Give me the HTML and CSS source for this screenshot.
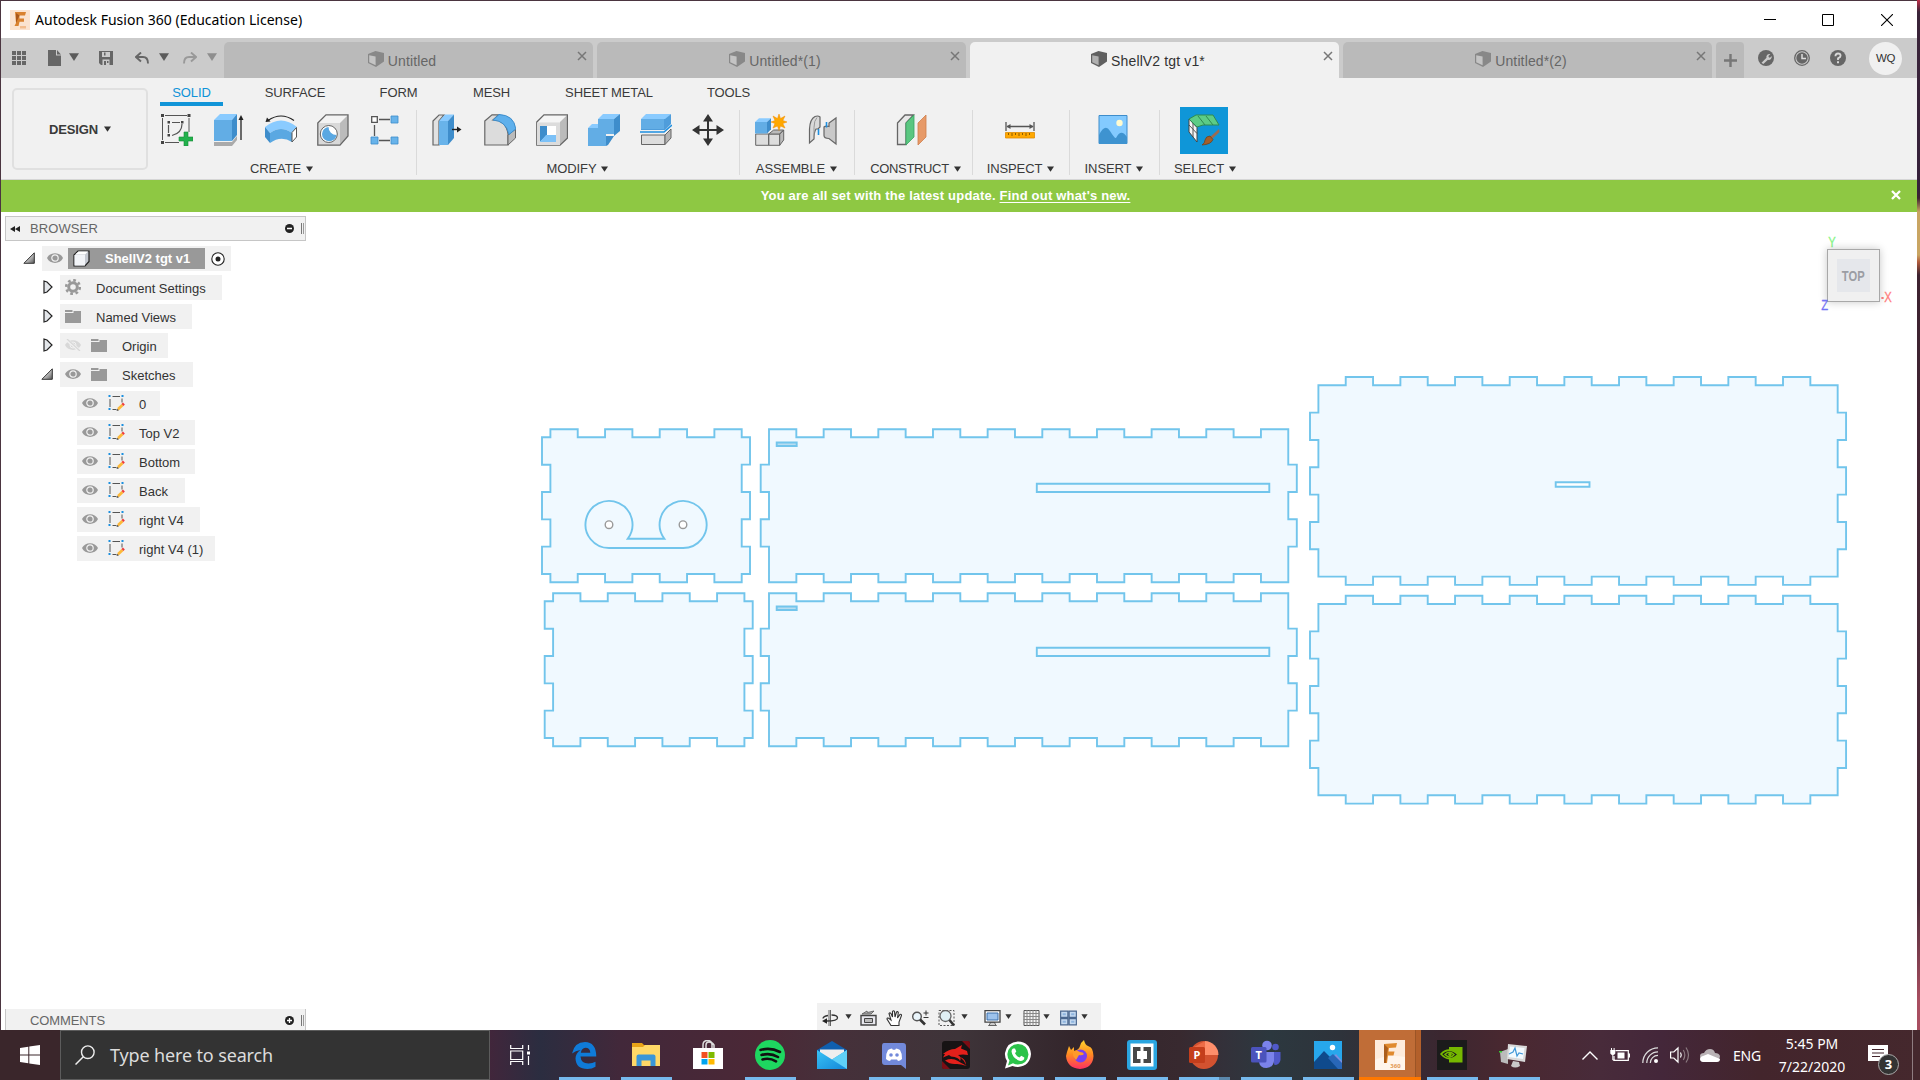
FILE: index.html
```
<!DOCTYPE html>
<html lang="en">
<head>
<meta charset="utf-8">
<title>Autodesk Fusion 360 (Education License)</title>
<link rel="stylesheet" href="styles.css">
</head>
<body>
<svg class="defs" width="0" height="0">
  <defs>
    <linearGradient id="triGrad" x1="0" y1="0" x2="1" y2="1"><stop offset=".3" stop-color="#eee"/><stop offset="1" stop-color="#555"/></linearGradient>
    <linearGradient id="flame" x1="0" y1="0" x2="0" y2="1"><stop offset="0" stop-color="#ffd52e"/><stop offset=".5" stop-color="#ff8a22"/><stop offset="1" stop-color="#ff2f63"/></linearGradient>
    <linearGradient id="mailG" x1="0" y1="0" x2="1" y2="1"><stop offset="0" stop-color="#39c3f5"/><stop offset="1" stop-color="#1487d8"/></linearGradient>
    <symbol id="eye" viewBox="0 0 16 12"><path d="M0 6C3 -.5 13 -.5 16 6 13 12.500 3 12.500 0 6Z" fill="#999"/><circle cx="8" cy="6" r="3.200" fill="none" stroke="#f1f1f1" stroke-width="1.200"/></symbol>
    <symbol id="eyeOff" viewBox="0 0 16 12"><path d="M0 6C3 -.5 13 -.5 16 6 13 12.500 3 12.500 0 6Z" fill="#d8d8d8"/><circle cx="8" cy="6" r="3" fill="none" stroke="#f1f1f1"/><path d="M1 0l14 12" stroke="#f1f1f1" stroke-width="3"/><path d="M2 0l13 12" stroke="#d8d8d8" stroke-width="1.300"/></symbol>
    <symbol id="folder" viewBox="0 0 16 14"><path d="M0 1h7.500v2H0zM0 4h8.500V2H16v12H0z" fill="#999"/></symbol>
    <symbol id="sketch" viewBox="0 0 16 16"><path d="M1.500 4v8M13.500 3.500v4M4 1.500h7.500M4 14.500h4" stroke="#555" fill="none"/><path d="M0 0h2v2H0zM13 0h2v2h-2zM0 13h2v2H0z" fill="#1a8fe0"/><path d="M9 15.500l0-2.800 4-3.700 2 2-4 3.800z" fill="#fdb93a"/><path d="M13 9l1.500-1.500 1.800 2L15 11z" fill="#ee3a3a"/><path d="M8 16l.8-2.200 1.600 1.600z" fill="#555"/></symbol>
    <symbol id="open" viewBox="0 0 12 12"><path d="M11.300 .8v10.500H.9z" fill="url(#triGrad)" stroke="#333" stroke-width="1"/></symbol>
    <symbol id="shut" viewBox="0 0 10 14"><path d="M1 1v12l3-1 5-5-5-5z" fill="#e3e6ea" stroke="#222" stroke-width="1.200"/></symbol>
    <symbol id="part" viewBox="0 0 16 16"><path d="M0 3L7.500 0 16 2v8.500L8 16 0 12z" fill="currentColor"/><path d="M1.200 4.300L7.600 5.500v8.700L1.200 11.300z" fill="#fff" fill-opacity=".5"/></symbol>
    <symbol id="x" viewBox="0 0 10 10"><path d="M1 1l8 8M9 1l-8 8" stroke="currentColor" stroke-width="1.500"/></symbol>
    <symbol id="dn" viewBox="0 0 10 8"><path d="M0 .3h10L5 8z" fill="currentColor"/></symbol>
    <path id="longSide" d="M769 429.300h27.330v8h27.330v-8h27.330v8h27.330v-8h27.330v8h27.330v-8h27.330v8h27.330v-8h27.330v8h27.330v-8h27.330v8h27.330v-8h27.330v8h27.330v-8h27.330v8h27.330v-8h27.330v8h27.330v-8h27.330V464.600H1296.800v27.330h-8.500v27.330h8.500v27.330h-8.500V582.300h-27.330v-8.300h-27.330v8.300h-27.330v-8.300h-27.330v8.300h-27.330v-8.300h-27.330v8.300h-27.330v-8.300h-27.330v8.300h-27.330v-8.300h-27.330v8.300h-27.330v-8.300h-27.330v8.300h-27.330v-8.300h-27.330v8.300h-27.330v-8.300h-27.330v8.300h-27.330v-8.300h-27.330v8.300H769V546.600h-8.300v-27.330h8.300v-27.330h-8.300v-27.330h8.300z"/>
    <path id="broad" d="M1318.400 385.300h27.330v-8.300h27.330v8.300h27.330v-8.300h27.330v8.300h27.330v-8.300h27.330v8.300h27.330v-8.300h27.330v8.300h27.330v-8.300h27.330v8.300h27.330v-8.300h27.330v8.300h27.330v-8.300h27.330v8.300h27.330v-8.300h27.330v8.300h27.330v-8.300h27.330v8.300h27.330v27.330h8.400v27.330h-8.400v27.330h8.400v27.330h-8.400v27.330h8.400v27.330h-8.400v27.330h-27.330v8.300h-27.330v-8.300h-27.330v8.300h-27.330v-8.300h-27.330v8.300h-27.330v-8.300h-27.330v8.300h-27.330v-8.300h-27.330v8.300h-27.330v-8.300h-27.330v8.300h-27.330v-8.300h-27.330v8.300h-27.330v-8.300h-27.330v8.300h-27.330v-8.300h-27.330v8.300h-27.330v-8.300h-27.330v-27.330h-8.400v-27.330h8.400v-27.330h-8.400v-27.330h8.400v-27.330h-8.400v-27.330h8.400z"/>
    <path id="endSide" d="M550.400 429.300h27.330v8h27.330v-8h27.330v8h27.330v-8h27.330v8h27.330v-8h27.330v8h8.300v27.330h-8.300v27.330h8.300v27.330h-8.300v27.330h8.300V574h-8.300v8.300h-27.330v-8.300h-27.330v8.300h-27.330v-8.300h-27.330v8.300h-27.330v-8.300h-27.330v8.300H550.400v-8.300H542v-27.330h8.400v-27.330H542v-27.330h8.400v-27.330H542V437.300h8.400z"/>
  </defs>
</svg>

<div class="window">
  <header class="titlebar">
    <svg class="app-logo" viewBox="0 0 20 20"><path d="M0 0h20v20H0z" fill="#fbe3cf"/><path d="M5 2h11l-1 3.500H9.500v3H14v3.300H9.500L8.500 16H4.500L6 13z" fill="#d9822f"/><path d="M9.500 5.500L6 13V3z" fill="#a9571a"/><path d="M10 16h6v2.500h-6z" fill="#f3bd8e"/></svg>
    <span>Autodesk Fusion 360 (Education License)</span>
    <div class="winbtns">
      <svg viewBox="0 0 12 12"><path d="M0 5.500h12" stroke="#000"/></svg>
      <svg viewBox="0 0 12 12"><path d="M.5 .5h11v11H.5z" fill="none" stroke="#000"/></svg>
      <svg viewBox="0 0 12 12"><path d="M0 0l12 12M12 0L0 12" stroke="#000" stroke-width="1.100"/></svg>
    </div>
  </header>

  <nav class="tabbar">
    <div class="quick">
      <svg class="q-grid" viewBox="0 0 14 14"><path d="M0 0h4v4H0zM5 0h4v4H5zM10 0h4v4h-4zM0 5h4v4H0zM5 5h4v4H5zM10 5h4v4h-4zM0 10h4v4H0zM5 10h4v4H5zM10 10h4v4h-4z" fill="#666"/></svg>
      <svg class="q-doc" viewBox="0 0 13 16"><path d="M0 0h8v5.500h5V16H0zM9 0l4 4.500H9z" fill="#666"/></svg>
      <svg class="q-arr" viewBox="0 0 10 8"><use href="#dn"/></svg>
      <svg class="q-save" viewBox="0 0 14 14"><path d="M0 0h14v14H2l-2-2z" fill="#666"/><path d="M3 1h8v5H3zM3.500 8.500h7V14h-7z" fill="#cbcbcb"/><path d="M5 1.500h1.500v3H5zM5 10h2v4H5zM8 10h1.500v2H8z" fill="#666"/></svg>
      <svg class="q-undo" viewBox="0 0 14 12"><path d="M6 .5L1 5l5 4.500M1.500 5H8q5 0 5 6.500" fill="none" stroke="#666" stroke-width="1.900"/></svg>
      <svg class="q-arr q-arr2" viewBox="0 0 10 8"><use href="#dn"/></svg>
      <svg class="q-redo" viewBox="0 0 14 12"><path d="M8 .5L13 5 8 9.500M12.500 5H6Q1 5 1 11.500" fill="none" stroke="#999" stroke-width="1.900"/></svg>
      <svg class="q-arr q-arr3" viewBox="0 0 10 8"><use href="#dn"/></svg>
    </div>
    <div class="tab"><svg class="part"><use href="#part"/></svg><span>Untitled</span><svg class="tx"><use href="#x"/></svg></div>
    <div class="tab"><svg class="part"><use href="#part"/></svg><span>Untitled*(1)</span><svg class="tx"><use href="#x"/></svg></div>
    <div class="tab active"><svg class="part"><use href="#part"/></svg><span>ShellV2 tgt v1*</span><svg class="tx"><use href="#x"/></svg></div>
    <div class="tab"><svg class="part"><use href="#part"/></svg><span>Untitled*(2)</span><svg class="tx"><use href="#x"/></svg></div>
    <div class="newtab"><svg viewBox="0 0 14 14"><path d="M7 0v14M0 7h14" stroke="#777" stroke-width="2.600"/></svg></div>
    <div class="status">
      <svg viewBox="0 0 16 16"><circle cx="8" cy="8" r="8" fill="#666"/><path d="M3.500 12.800l5-5a3 3 0 0 1 3.900-3.700l-2 2 .4 1.200 1.200.4 1.600-1.700a3 3 0 0 1-3.700 3.800l-4.600 4.300z" fill="#cbcbcb"/></svg>
      <svg viewBox="0 0 16 16"><circle cx="8" cy="8" r="7.300" fill="none" stroke="#666" stroke-width="1.300"/><circle cx="8" cy="8" r="5.700" fill="#666"/><path d="M8 4v4.500h4" fill="none" stroke="#ddd" stroke-width="1.500"/></svg>
      <svg viewBox="0 0 16 16"><circle cx="8" cy="8" r="8" fill="#666"/><path d="M5.400 6.200Q5.500 3.500 8 3.500t2.600 2.300Q10.600 7.300 8 8.300V10" fill="none" stroke="#d8d8d8" stroke-width="1.800"/><path d="M7 11.300h2v2H7z" fill="#d8d8d8"/></svg>
      <span class="avatar">WQ</span>
    </div>
  </nav>

  <section class="ribbon">
    <div class="workspace">DESIGN<svg class="ga"><use href="#dn"/></svg></div>
    <div class="ribbon-main">
      <div class="rtabs"><span class="on">SOLID</span><span class="w84">SURFACE</span><span>FORM</span><span>MESH</span><span class="w112">SHEET METAL</span><span class="w67">TOOLS</span></div>
      <div class="groups">
        <div class="group g1"><div class="icons">
          <svg viewBox="0 0 32 32"><path d="M4 1.500h22M1.500 4v22M4 28.500h14M28 4v14" stroke="#555" fill="none"/><path d="M7.500 11v8M11 8.500h8M21 10q0 9-10 11.500" stroke="#555" fill="none" stroke-width="1.200"/><path d="M0 0h3v3H0zM26.500 0h3v3h-3zM0 27h3v3H0zM6.500 7H9v2.500H6.500zM20 7h2.500v2.500H20zM6.500 20H9v2.500H6.500z" fill="#444"/><path d="M23 18h4v5h5v4h-5v5h-4v-5h-5v-4h5z" fill="#22b14c" stroke="#178a38" stroke-width=".6"/></svg>
          <svg viewBox="0 0 32 32"><path d="M1 28h18l5-6v4l-5 6H1z" fill="#aaa"/><path d="M1 6h18v21H1z" fill="#62ade5"/><path d="M1 6l6-6h17l-5 6z" fill="#8acbff"/><path d="M19 6l5-6v21l-5 6z" fill="#3e8dcb"/><path d="M28 26V4" stroke="#222" stroke-width="1.300"/><path d="M25.500 6L28 1l2.500 5z" fill="#222"/></svg>
          <svg viewBox="0 0 32 32"><path d="M0 13Q16 0 32 13l-5 6Q16 11 5 19z" fill="#8acbff"/><path d="M0 13l5 6v10l-5-6z" fill="#3e8dcb"/><path d="M5 19Q16 11 27 19v9q-11-7-22 1z" fill="#5aa8e2"/><path d="M27 18.500l4.500-5V23L27 28z" fill="#fff" stroke="#555"/><path d="M3 6.500Q16-2.500 29 6.500" fill="none" stroke="#222" stroke-width="1.200"/><path d="M.5 8l1.500-4.500 3.500 4z" fill="#222"/></svg>
          <svg viewBox="0 0 32 32"><path d="M.8 9L9 .8h22L23 9z" fill="#f3f3f3"/><path d="M23 9l8-8v21l-8 9z" fill="#bbb"/><path d="M.8 9H23v22H.8z" fill="#d9d9d9"/><path d="M.8 9L9 .8h22V22l-8 9.200H.8z" fill="none" stroke="#666" stroke-width="1.300"/><circle cx="11.800" cy="20" r="8.500" fill="#fff" stroke="#666"/><path d="M11.500 13a8 8 0 0 0 8 8q-1 6-7.700 6.200A7.200 7.200 0 0 1 5 20q.5-6 6.500-7z" fill="#5aa8e2"/></svg>
          <svg viewBox="0 0 32 32"><path d="M10 5.500h11M5.500 11v11M10 26.500h11" stroke="#555" stroke-width="1.300"/><path d="M2.700 2.700h5.600v5.600H2.700z" fill="#fff" stroke="#555" stroke-width="1.300"/><path d="M22 2h7v7h-7zM2 23h7v7H2zM22 23h7v7h-7z" fill="#68b3ea" stroke="#3e8dcb" stroke-width=".8"/></svg>
        </div><div class="gl">CREATE<svg class="ga"><use href="#dn"/></svg></div></div>
        <div class="group g2"><div class="icons">
          <svg viewBox="0 0 32 32"><path d="M1 7l6-6h5L7 7v24H1z" fill="#e2e2e2" stroke="#666" stroke-width="1.200"/><path d="M7 7h9v24H7z" fill="#68b3ea"/><path d="M7 7l6-6.500h9L16 7z" fill="#8acbff"/><path d="M16 7l6-6.500V24l-6 7z" fill="#3e8dcb"/><path d="M20 15.500h7" stroke="#222" stroke-width="1.400"/><path d="M25 12.500l4.500 3-4.500 3z" fill="#222"/></svg>
          <svg viewBox="0 0 32 32"><path d="M.8 7L8 .8h7L9 6q13 0 15 14v11H.8z" fill="#dcdcdc" stroke="#666" stroke-width="1.200"/><path d="M24 21l7.500-6v9L24 31z" fill="#bbb" stroke="#666"/><path d="M9 6l6-5.500Q30 1 31.800 15L25 20.500Q22 7 9 6z" fill="#5fb0ec" stroke="#3e8dcb"/></svg>
          <svg viewBox="0 0 32 32"><path d="M.8 8L8 .8h23.500L24 8z" fill="#f5f5f5"/><path d="M24 8l7.500-7.200V24L24 31z" fill="#bbb"/><path d="M.8 8L8 .8h23.500V24L24 31.200H.8z" fill="none" stroke="#666" stroke-width="1.300"/><path d="M1 8.500h23V31H1z" fill="#dcdcdc"/><path d="M4 12h16v16H4z" fill="#fff"/><path d="M4 12h7v9l-7 7z" fill="#3e8dcb"/><path d="M4 28l6-7h10v7z" fill="#7cc1f7"/></svg>
          <svg viewBox="0 0 32 32"><path d="M10 5h16v15h-8v12H0V14h10z" fill="#62ade5"/><path d="M10 5l5-5h17l-6 5zM0 14l4-4h6v4z" fill="#8acbff"/><path d="M26 5l6-5v17l-6 5zM18 22h8l-6 9-2 1z" fill="#3e8dcb"/></svg>
          <svg viewBox="0 0 32 32"><path d="M1 5l5-5h25l-5 5z" fill="#8acbff"/><path d="M25 5l6-5v10l-6 6H1V5z" fill="#4f9ddb"/><path d="M1 5h23v10H1z" fill="#62ade5"/><path d="M0 18h24l8-7" stroke="#1e8fe0" stroke-width="1.500" fill="none"/><path d="M1.500 21H25v9.500H1.500z" fill="#ddd" stroke="#666"/><path d="M25 21l6-6v9l-6 6.500z" fill="#b5b5b5" stroke="#666"/></svg>
          <svg viewBox="0 0 32 32"><path d="M16 5v22M5 16h22" stroke="#333" stroke-width="2"/><path d="M16 0l5 7.500H11zM16 32l5-7.500H11zM0 16l7.500-5v10zM32 16l-7.500-5v10z" fill="#333"/></svg>
        </div><div class="gl">MODIFY<svg class="ga"><use href="#dn"/></svg></div></div>
        <div class="group g3"><div class="icons">
          <svg viewBox="0 0 32 32"><path d="M.7 20h13v11.300H.7zM13.700 20h11v11.300h-11z" fill="#ddd" stroke="#666"/><path d="M13.700 20l5-4h10l-4 4zM24.700 20l4-4v10l-4 5.300z" fill="#bbb" stroke="#666"/><path d="M0 8h12v11.500H0z" fill="#62ade5"/><path d="M0 8l4-3.700h12L12 8z" fill="#8acbff"/><path d="M12 8l4-3.700v11l-4 4.200z" fill="#3e8dcb"/><path d="M24 0l1.500 4.500L30 2l-2.200 4.500 4.200 1.500-4.200 1.500L30 14l-4.500-2L24 16.500 22.500 12 18 14l2-4.500L16 8l4-1.500L18 2l4.500 2.500z" fill="#ffa800" stroke="#f08a00" stroke-width=".5"/></svg>
          <svg viewBox="0 0 32 32"><path d="M2.500 15Q3 5 8 2.500q3-1.200 5 .5v10l-2 2H9q-2 3-2 10l-4.500 4z" fill="#dadada" stroke="#666" stroke-width="1.200"/><path d="M10 3.500q-3 3-3 10v10" stroke="#999" fill="none"/><path d="M29 4v26l-7-5.500q-5 0-5-3V13q1.500-1.500 5-.5V9z" fill="#c9c9c9" stroke="#666" stroke-width="1.200"/><path d="M11.500 15v6M19.500 8v5.500" stroke="#1e8fe0" stroke-width="1.600"/></svg>
        </div><div class="gl">ASSEMBLE<svg class="ga"><use href="#dn"/></svg></div></div>
        <div class="group g4"><div class="icons">
          <svg viewBox="0 0 32 32"><path d="M1.500 9L9 1h8.500L10 9v21.500H1.500z" fill="#e8e8e8" stroke="#666" stroke-width="1.300"/><path d="M10 9l8-8v22l-8 8z" fill="#5ac680" stroke="#37a562" stroke-width=".8"/><path d="M22 9l8-8v22l-8 8z" fill="#e79a68" stroke="#cf7f4c" stroke-width=".8"/></svg>
        </div><div class="gl tight">CONSTRUCT<svg class="ga"><use href="#dn"/></svg></div></div>
        <div class="group g5"><div class="icons">
          <svg viewBox="0 0 32 32"><path d="M2 8v9M30 8v9M3 12.500h26" stroke="#555" stroke-width="1.300"/><path d="M2.500 12.500l4-2.500v5zM29.500 12.500l-4-2.500v5z" fill="#555"/><path d="M1.500 18.500h29v5.500h-29z" fill="#ffa800" stroke="#e08c00" stroke-width=".8"/><path d="M4.500 19v2M8 19v3M11.500 19v2M15 19v3M18.500 19v2M22 19v3M25.500 19v2" stroke="#8a5a00"/></svg>
        </div><div class="gl">INSPECT<svg class="ga"><use href="#dn"/></svg></div></div>
        <div class="group g6"><div class="icons">
          <svg viewBox="0 0 32 32"><path d="M2 1.500h28v28H2z" fill="#83caff" stroke="#3e8dcb"/><path d="M2 21Q8 9 13 17t6 7q5-10 11-1v7H2z" fill="#3e93d0"/><circle cx="22.500" cy="9" r="3.200" fill="#fffbd0"/></svg>
        </div><div class="gl">INSERT<svg class="ga"><use href="#dn"/></svg></div></div>
        <div class="group g7"><div class="icons sel"><span class="selbox">
          <svg viewBox="0 0 32 32"><path d="M1 5l8 8.500V28l-8-10z" fill="#f5f5f5" stroke="#444"/><path d="M1 11l8 8.500M5 9v14" stroke="#444" stroke-width=".9"/><path d="M1 5l7-4h17l6 10H15L9 13z" fill="#5ccc86" stroke="#2f8a52"/><path d="M10 2l7 9M18 2l7 9" stroke="#2f8a52"/><path d="M31 15l-9 8 2 2 7.500-7z" fill="#9a6b52"/><path d="M22 22l3 3.500q-2 5-11 5.500 3-2 3-5 1-4 5-4z" fill="#a35f2a" stroke="#6b3d17" stroke-width=".7"/></svg></span>
        </div><div class="gl">SELECT<svg class="ga"><use href="#dn"/></svg></div></div>
      </div>
    </div>
  </section>

  <div class="notice"><p>You are all set with the latest update. <a>Find out what's new.</a></p><svg class="nx" viewBox="0 0 10 10"><path d="M1 1l8 8M9 1l-8 8" stroke="#fff" stroke-width="2.300"/></svg></div>

  <main class="canvas">
    <svg class="drawing" viewBox="1 212 1916 818">
      <g class="profile">
        <use href="#endSide"/><use href="#endSide" transform="translate(2.700 164)"/>
        <use href="#longSide"/><use href="#longSide" transform="translate(0 164)"/>
        <use href="#broad"/><use href="#broad" transform="translate(0 218.700)"/>
        <path d="M609 548A23.500 23.500 0 1 1 627.700 538.700H664.400A23.500 23.500 0 1 1 683 548Z"/>
        <path d="M1036.800 483.700h232.500v8.300h-232.500zM1036.800 647.700h232.500v8.300h-232.500z"/>
        <path class="thin" d="M776.700 442.500h20v3.500h-20zM776.700 606.500h20v3.500h-20z"/>
        <path class="slit" d="M1555.700 482.200h33.800v4.600h-33.800z"/>
      </g>
      <g fill="#fff" stroke="#999" stroke-width="1.400"><circle cx="609" cy="524.700" r="3.800"/><circle cx="683" cy="524.700" r="3.800"/></g>
    </svg>

    <aside class="browser">
      <div class="panel-head"><svg class="rew" viewBox="0 0 10 6"><path d="M5 0v6L0 3zM10 0v6L5 3z" fill="#222"/></svg><span>BROWSER</span><svg class="pm" viewBox="0 0 9 9"><circle cx="4.500" cy="4.500" r="4.500" fill="#222"/><path d="M2 4.500h5" stroke="#fff" stroke-width="1.500"/></svg><i class="grip"></i></div>
      <ul class="tree">
        <li class="r0"><svg class="tw"><use href="#open"/></svg><div class="node root"><svg class="eye"><use href="#eye"/></svg><b><svg class="cube" viewBox="0 0 17 17"><path d="M1 5l4-4h11v10.500L12 16H1z" fill="#c4c8d0" stroke="#222" stroke-width="1.200"/><path d="M1.500 5H12v10.500H1.500z" fill="#f2f4f8"/><path d="M2 4.500l3.500-3H15l-3 3z" fill="#fff"/></svg>ShellV2 tgt v1</b><svg class="radio" viewBox="0 0 14 14"><circle cx="7" cy="7" r="6.200" fill="#fff" stroke="#222" stroke-width="1.100"/><circle cx="7" cy="7" r="2.500" fill="#222"/></svg></div></li>
        <li class="r1"><svg class="tws"><use href="#shut"/></svg><div class="node n162"><svg class="gear" viewBox="0 0 16 16"><circle cx="8" cy="8" r="6.800" fill="none" stroke="#999" stroke-width="2.600" stroke-dasharray="2.700 2.640"/><circle cx="8" cy="8" r="4.300" fill="none" stroke="#999" stroke-width="3"/></svg><span>Document Settings</span></div></li>
        <li class="r1"><svg class="tws"><use href="#shut"/></svg><div class="node n132"><svg class="folder"><use href="#folder"/></svg><span>Named Views</span></div></li>
        <li class="r1"><svg class="tws"><use href="#shut"/></svg><div class="node n108"><svg class="eye"><use href="#eyeOff"/></svg><svg class="folder f2"><use href="#folder"/></svg><span>Origin</span></div></li>
        <li class="r1"><svg class="tw"><use href="#open"/></svg><div class="node n133"><svg class="eye"><use href="#eye"/></svg><svg class="folder f2"><use href="#folder"/></svg><span>Sketches</span></div></li>
        <li class="r2"><div class="node n83"><svg class="eye"><use href="#eye"/></svg><svg class="sk"><use href="#sketch"/></svg><span>0</span></div></li>
        <li class="r2"><div class="node n118"><svg class="eye"><use href="#eye"/></svg><svg class="sk"><use href="#sketch"/></svg><span>Top V2</span></div></li>
        <li class="r2"><div class="node n118"><svg class="eye"><use href="#eye"/></svg><svg class="sk"><use href="#sketch"/></svg><span>Bottom</span></div></li>
        <li class="r2"><div class="node n108"><svg class="eye"><use href="#eye"/></svg><svg class="sk"><use href="#sketch"/></svg><span>Back</span></div></li>
        <li class="r2"><div class="node n123"><svg class="eye"><use href="#eye"/></svg><svg class="sk"><use href="#sketch"/></svg><span>right V4</span></div></li>
        <li class="r2"><div class="node n138"><svg class="eye"><use href="#eye"/></svg><svg class="sk"><use href="#sketch"/></svg><span>right V4 (1)</span></div></li>
      </ul>
    </aside>

    <div class="comments panel-head"><span>COMMENTS</span><svg class="pm" viewBox="0 0 9 9"><circle cx="4.500" cy="4.500" r="4.500" fill="#222"/><path d="M2 4.500h5M4.500 2v5" stroke="#fff" stroke-width="1.300"/></svg><i class="grip"></i></div>

    <div class="viewcube">
      <span class="ax y">Y</span><span class="ax dash"></span><span class="ax xx">X</span><div class="face"><span><em>TOP</em></span></div><span class="ax z">Z</span>
    </div>

    <div class="navbar">
      <svg class="n1" viewBox="0 0 17 16"><path d="M8.500 0v16M7 0v16" stroke="#555" stroke-width=".9"/><path d="M6 5.500q-5 1-5 3M9.500 5q6 0 6 3t-11 3" fill="none" stroke="#333" stroke-width="1.300"/><path d="M0 11l5-2.800v5.600z" fill="#222"/></svg><svg class="na a1"><use href="#dn"/></svg>
      <svg class="n2" viewBox="0 0 17 16"><path d="M1 5.500h15V15H1z" fill="#e8e8ee" stroke="#444" stroke-width="1.400"/><path d="M4.500 8.500h8v4h-8z" fill="#bbb" stroke="#444"/><path d="M2 4l5-3 .5 1.500L14 1l-3 3z" fill="#aaa" stroke="#555" stroke-width=".8"/></svg>
      <svg class="n3" viewBox="0 0 17 16"><path d="M5 15.500L1 9q0-1.500 1.700-.8L5 10 3 3.500q.8-1.300 2 0L6.500 7 6.500 1.500q1-1.500 2 0L9 7l1.500-5q1.300-1 1.800.5L11.500 8 14 4.500q1.500-.7 1.500 1L13 12v3.500z" fill="#fff" stroke="#333" stroke-width="1.100"/></svg>
      <svg class="n4" viewBox="0 0 17 16"><circle cx="5" cy="6.500" r="4.300" fill="#eaf5fb" stroke="#555" stroke-width="1.400"/><path d="M8 9.500l5 5" stroke="#333" stroke-width="2.600"/><path d="M11.500 3h5M14 .5v5M11.500 7.500h5" stroke="#333"/></svg>
      <svg class="n5" viewBox="0 0 16 16"><path d="M.5 .5h15v15H.5z" fill="none" stroke="#555" stroke-dasharray="2 1.500"/><circle cx="7" cy="6" r="5.500" fill="#dff0f5" stroke="#666" stroke-width="1.300"/><path d="M11 10l4.500 5.500" stroke="#333" stroke-width="2.600"/></svg><svg class="na a5"><use href="#dn"/></svg>
      <svg class="n6" viewBox="0 0 17 16"><path d="M1 .7h15v11.500H1z" fill="#fff" stroke="#444" stroke-width="1.300"/><path d="M3 3h11v7H3z" fill="#9cc2ec" stroke="#3b6faa"/><path d="M6 12.500h5v1.500l1.500 1.500h-8L6 14z" fill="#ccc" stroke="#444" stroke-width=".8"/></svg><svg class="na a6"><use href="#dn"/></svg>
      <svg class="n7" viewBox="0 0 16 16"><path d="M.5 .5h15v15H.5z" fill="#f4f4f4" stroke="#555"/><path d="M3.500 0v16M6.500 0v16M9.500 0v16M12.500 0v16M0 3.500h16M0 6.500h16M0 9.500h16M0 12.500h16" stroke="#888"/></svg><svg class="na a7"><use href="#dn"/></svg>
      <svg class="n8" viewBox="0 0 16 14"><path d="M.6 .6h6.800v5.800H.6zM8.600 .6h6.800v5.800H8.600zM.6 7.600h6.800v5.800H.6zM8.600 7.600h6.800v5.800H8.600z" fill="#c4d9f0" stroke="#4a678f" stroke-width="1.100"/><path d="M2.500 2.500h3v2h-3zM10.500 2.500h3v2h-3zM2.500 9.500h3v2h-3zM10.500 9.500h3v2h-3z" fill="#8fb5de"/></svg><svg class="na a8"><use href="#dn"/></svg>
    </div>
  </main>
</div>

<footer class="taskbar">
  <div class="start"><svg viewBox="0 0 20 20"><path d="M0 3l8.300-1.200v7.700H0zM9.300 1.600L20 0v9.500H9.300zM0 10.500h8.300v7.700L0 17zM9.300 10.500H20V20L9.300 18.400z" fill="#fff"/></svg></div>
  <div class="search"><svg viewBox="0 0 20 20"><circle cx="12.800" cy="7.200" r="6.300" fill="none" stroke="#eee" stroke-width="1.400"/><path d="M8.300 11.700L.5 19.500" stroke="#eee" stroke-width="1.500"/></svg><span>Type here to search</span></div>
  <div class="taskview"><svg viewBox="0 0 20 20"><path d="M.7 0v3.500h12V0M.7 20v-3.500h12V20M.7 6h12v8.500H.7zM18.500 0v5M18.500 11v9" fill="none" stroke="#fff" stroke-width="1.200"/><path d="M17 6.500h3v3h-3z" fill="#fff"/></svg></div>
  <div class="apps">
    <span class="app run"><svg viewBox="0 0 30 30"><path d="M3 13.500Q5.500 2 16 2q11 0 11.300 14.500H11.500q.5 7 8 7 4 0 7-1.800v5Q23 29 18.500 29 7 29 6.500 18.500q.2-5.500 5-8.500Q6.500 10.500 3 13.500zM11.800 12.800h9.500q-.3-5-4.800-5-4 .3-4.700 5z" fill="#0f7bd8"/></svg></span>
    <span class="app run"><svg viewBox="0 0 30 30"><path d="M1 3h10l2 2h13v4H1z" fill="#e8a317"/><path d="M1 7h11l2-2h15v21H1z" fill="#ffd867"/><path d="M5.500 26V16.500q0-2 2-2h15q2 0 2 2V26h-5v-5.500h-9V26z" fill="#3a96d8"/></svg></span>
    <span class="app"><svg viewBox="0 0 30 30"><path d="M10 8V5q0-4.500 4.500-4.500T19 5v3M13 8V5q0-3 3-3t5 3v3" fill="none" stroke="#ddd" stroke-width="1.500"/><path d="M0 8h30v21H0z" fill="#fff"/><path d="M8.500 12h6v6h-6z" fill="#f25022"/><path d="M15.500 12h6v6h-6z" fill="#7fba00"/><path d="M8.500 19h6v5.500h-6z" fill="#00a4ef"/><path d="M15.500 19h6v5.500h-6z" fill="#ffb900"/></svg></span>
    <span class="app run"><svg viewBox="0 0 30 30"><circle cx="15" cy="15" r="15" fill="#1ed760"/><path d="M5.500 10q10-3 19.500 2M6.500 15q9-2.500 16.500 2M7.500 19.500q7-2 13.500 1.800" fill="none" stroke="#111" stroke-width="2.600" stroke-linecap="round"/></svg></span>
    <span class="app"><svg viewBox="0 0 30 30"><path d="M0 10L15 1l15 9v19H0z" fill="#0f5fae"/><path d="M3 9.500h24V20H3z" fill="#eee"/><path d="M0 10l15 9.500L30 10v19H0z" fill="url(#mailG)"/><path d="M15 19.500L30 10v19z" fill="#5fd0f7"/></svg></span>
    <span class="app run"><svg viewBox="0 0 30 30"><path d="M5 3h19q3 0 3 3v23l-5-4H6q-3 0-3-3V6q0-3 2-3z" fill="#7289da"/><path d="M7 19q-.5-5 2-9 2-1.500 4-1.500l.8 1.300h2.400L17 8.500q2 0 4 1.500 2.500 4 2 9-2 2-4 2l-1-1.500h-6L11 21q-2 0-4-2z" fill="#fff"/><circle cx="12" cy="15" r="1.800" fill="#7289da"/><circle cx="18" cy="15" r="1.800" fill="#7289da"/></svg></span>
    <span class="app run"><svg viewBox="0 0 30 30"><rect x="1" y="1" width="28" height="28" rx="3" fill="#161314"/><path d="M21 1h6q2 0 2 2v6zM1 21v6q0 2 2 2h6z" fill="#7c0d14"/><path d="M2 14q6-5 12-5l7-4-1 3.500 6 2.500 1 4-5-.5-5 .5q4 2 2 6-1-4-9-4.500l-2-1.500-6 2.500 2-3.500zM4 20.500q7-3 13 .5t9 5q-8-2.500-11-2-6 .5-11-3.500zM19 17q6 2 6 8-2-5-6-8z" fill="#e3201b"/></svg></span>
    <span class="app run"><svg viewBox="0 0 30 30"><path d="M2 28.500l2-7.500Q1.500 17 2 13 4 2 15 1.500 27 2 28 14q-1 12-13 13-3 0-5.500-1z" fill="#fff"/><path d="M5 25.500l1.500-5Q4 17 4.500 13.500 6 4.500 15 4q9.500.5 10.500 10.500Q24.500 24 15 24.500q-2.700 0-5-1.300z" fill="#2bc34a"/><path d="M10 8.500l2 0 1.300 3-1.300 1.800q1.500 3 4.500 4.300l1.800-1.800 3 1.600q.3 3.600-4 3.600Q9.500 18.500 8.500 11.500q0-2 1.500-3z" fill="#fff"/></svg></span>
    <span class="app run"><svg viewBox="0 0 30 30"><path d="M2 12l2-6 2 4 3-3v4q5-1 6-5t4-6q1 5 4 6t4 3q1 2 1.500 7Q28 28 15 29 2 28 1 16z" fill="url(#flame)"/><circle cx="15.500" cy="16" r="6.500" fill="#7a3ff0"/><path d="M8 11q4-1 7 1 3 0 4 2-2 2-5 1l-3 5q-4-4-3-9z" fill="#ff9a2a"/></svg></span>
    <span class="app run"><svg viewBox="0 0 30 30"><rect width="30" height="30" rx="3" fill="#2aa5e0"/><path d="M3.500 3.500h23v23h-23z" fill="#fff"/><path d="M13.500 7H6v16h7.500v-4H10V11h3.500zM16.500 7H24v16h-7.500v-4H20V11h-3.500z" fill="#484848"/></svg></span>
    <span class="app run ppt"><svg viewBox="0 0 30 30"><path d="M15.500 15V1a14 14 0 1 0 13.500 14z" fill="#d35230"/><path d="M16 1a14 14 0 0 1 13.500 14H16z" fill="#ff8f6b"/><path d="M4 7.500L16 1v14H3z" fill="#ed6c47"/><rect y="7" width="16" height="16" rx="1.500" fill="#c43e1c"/><text x="8" y="19" class="glyph">P</text></svg></span>
    <span class="app run"><svg viewBox="0 0 30 30"><circle cx="24.500" cy="7" r="3.300" fill="#5059c9"/><path d="M20 12h9.500v8q-1 5-6 5z" fill="#5059c9"/><circle cx="16" cy="5.500" r="4.800" fill="#7b83eb"/><path d="M8 12h15v9q-1 7-7.500 7T8 22z" fill="#7b83eb"/><rect y="7" width="15.500" height="15.500" rx="1.500" fill="#4b53bc"/><text x="7.700" y="19" class="glyph">T</text></svg></span>
    <span class="app run"><svg viewBox="0 0 30 30"><path d="M1 1h28v28H1z" fill="#27a7ec"/><path d="M29 29V21l-6-7-8 8 7 7z" fill="#7d8ee0"/><path d="M1 22l10-11 18 18H1z" fill="#0f4a8c"/><path d="M15 18l5-4 9 9v6h-4z" fill="#2867b8"/><circle cx="19.500" cy="7.500" r="2.700" fill="#fff"/></svg></span>
    <span class="app fusion"><svg viewBox="0 0 30 30"><path d="M0 0h30v30H0z" fill="#fdebdc"/><path d="M0 20q12-6 30-3v13H0z" fill="#fff5ec"/><path d="M9 4l13-1-1 4.500-7 .5-.5 3.500h6l-1 4h-5.500L12 23H9l2-6z" fill="#e08a2e"/><path d="M9 4l4 4-2 15H9z" fill="#ab5d1b"/><text x="20.500" y="27.500" class="small">360</text></svg></span>
    <span class="app run"><svg viewBox="0 0 30 30"><path d="M0 0h30v30H0z" fill="#1b1b1b"/><path d="M12 7h13.500v15.500H12z" fill="#76b900"/><path d="M4 14Q12 6 21 14.500 14 22 4 14z" fill="#1b1b1b"/><path d="M4 14q8-8 17 .5Q12 23 4 14zM8 14.500q4-4.500 9 0-4 5-9 0z" fill="none" stroke="#76b900" stroke-width="1.600"/><circle cx="13" cy="14.500" r="1.800" fill="#76b900"/></svg></span>
    <span class="app run"><svg viewBox="0 0 30 30"><path d="M1 12l8-3v15l-7-2z" fill="#bbb"/><path d="M9 4l19 2-2 16-18-3z" fill="#d9d9d9"/><path d="M11 6.500l14.500 1.500-1.500 11-14.500-2z" fill="#f2fafe"/><path d="M10 14l4-2 2-4 2 8 2-3 4 1" fill="none" stroke="#3f97d8" stroke-width="1.200"/><path d="M14 21l6 1 1 4q-5 3-9 0z" fill="#c9c9c9"/><path d="M0 11h3v1.500H0z" fill="#3c3"/></svg></span>
  </div>
  <div class="tray">
    <svg class="t1" viewBox="0 0 16 9"><path d="M.5 8.500L8 1l7.500 7.500" fill="none" stroke="#fff" stroke-width="1.400"/></svg>
    <svg class="t2" viewBox="0 0 20 14"><path d="M5.500 2.600h12.800v9.800H4V8" fill="none" stroke="#fff" stroke-width="1.200"/><path d="M7.500 4.500h7v6h-7zM18.500 5.500H20v4h-1.500zM.3 2h5v3.500q-1 1.500-2.500 1.500T.3 5.500zM1 0h1v2H1zM3.600 0h1v2h-1z" fill="#fff"/><path d="M2.800 6v6h2" stroke="#fff" fill="none"/></svg>
    <svg class="t3" viewBox="0 0 16 16"><path d="M.8 16A15.200 15.200 0 0 1 16 .8M4.800 16A11.200 11.200 0 0 1 16 4.800M8.300 16A7.700 7.700 0 0 1 16 8.300" fill="none" stroke="#ddd" stroke-width="1.200"/><circle cx="14" cy="14" r="2" fill="#fff"/></svg>
    <svg class="t4" viewBox="0 0 20 18"><path d="M.6 6h3.200L8 2v14l-4.200-4H.6z" fill="none" stroke="#fff" stroke-width="1.200"/><path d="M10.500 6.500q1.500 2.500 0 5" fill="none" stroke="#fff" stroke-width="1.200"/><path d="M13.300 4q3 5 0 10M16 1.500q5 7.500 0 15" fill="none" stroke="#8b7a80" stroke-width="1.200"/></svg>
    <svg class="t5" viewBox="0 0 20 13"><path d="M4 10Q0 10 0 7t4-3q2-4 6-4t5 4q4 0 5 3 0 3-2 4z" fill="#b9b2b5"/><path d="M3 13q-3-.5-3-3t3-3l5-2 12 5q0 3-3 3z" fill="#fff"/></svg>
    <span class="lang">ENG</span>
    <div class="clock"><span>5:45 PM</span><span>7/22/2020</span></div>
    <div class="notif"><svg viewBox="0 0 20 20"><path d="M0 0h20v16h-5l-4 4v-4H0z" fill="#fff"/><path d="M4 4.500h12M4 8h12M4 11.500h8" stroke="#43252c" stroke-width="1.200"/></svg><span class="count">3</span></div>
  </div>
</footer>
</body>
</html>
```
FILE: styles.css
```
* { box-sizing: border-box; }
body {
  margin: 0; width: 1920px; height: 1080px; overflow: hidden;
  display: flex; flex-direction: column;
  font-family: "Liberation Sans", Arial, sans-serif; font-size: 13px; color: #3a3a3a;
  background: linear-gradient(#c0304a 0, #3a2338 12px, #35203a 190px, #3d2230 198px, #c9a562 212px, #c9a562 255px, #b05a3c 262px, #3d2230 275px, #4a2a38 900px, #a84e60 1000px, #a84e60 1030px);
}
svg { display: block; flex: none; }
.defs { position: absolute; }
.window {
  flex: 1; margin: 0 3px 0 0; border-left: 1px solid #4b3540; border-top: 1px solid #4b3540;
  background: #fff; display: flex; flex-direction: column; min-height: 0;
}

.titlebar { height: 37px; display: flex; align-items: center; padding: 0 24px 0 9px; color: #000; font: 14px "Noto Sans", sans-serif; }
.app-logo { width: 20px; height: 20px; margin-right: 5px; }
.titlebar span { letter-spacing: .02px; }
.winbtns { margin-left: auto; display: flex; gap: 47px; }
.winbtns svg { width: 12px; height: 12px; }
.winbtns svg:first-child { margin-right: -1px; }

.tabbar { height: 40px; background: #cbcbcb; display: flex; align-items: flex-end; }
.quick { width: 223px; height: 40px; display: flex; align-items: center; padding-left: 11px; color: #5c5c5c; flex: none; }
.q-grid { width: 14px; height: 14px; }
.q-doc { width: 13px; height: 16px; margin-left: 22px; }
.q-arr { width: 10px; height: 8px; margin-left: 8px; margin-top: -2px; }
.q-save { width: 14px; height: 14px; margin-left: 20px; }
.q-undo { width: 14px; height: 12px; margin-left: 22px; }
.q-arr2 { margin-left: 10px; }
.q-redo { width: 14px; height: 12px; margin-left: 14px; }
.q-arr3 { margin-left: 10px; color: #8e8e8e; }
.tab {
  position: relative; width: 369px; height: 36px; margin-right: 4px; flex: none; border-radius: 5px 5px 0 0;
  background: #bababa; color: #666; font-size: 14px; letter-spacing: .13px;
  display: flex; align-items: center; justify-content: center; gap: 4px; padding: 2px 13px 0 0;
}
.tab .part { width: 16px; height: 16px; color: #888; margin-top: -4px; }
.tab.active { background: #f1f1f1; color: #333; }
.tab.active .part { color: #606060; }
.tx { position: absolute; right: 6px; top: 9px; width: 10px; height: 10px; color: #777; }
.newtab { width: 28px; height: 36px; background: #bababa; border-radius: 4px 4px 0 0; display: flex; align-items: center; justify-content: center; flex: none; }
.newtab svg { width: 13px; height: 13px; }
.status { flex: 1; height: 40px; display: flex; align-items: center; gap: 20px; padding-left: 14px; }
.status svg { width: 16px; height: 16px; }
.avatar { width: 33px; height: 33px; border-radius: 50%; background: #f0f0f0; margin-left: 3px; display: flex; align-items: center; justify-content: center; font-size: 11.500px; letter-spacing: -.4px; color: #333; }

.ribbon { height: 102px; background: #f1f1f1; border-bottom: 1px solid #d6d6d6; display: flex; }
.workspace { width: 136px; height: 82px; margin: 10px 0 0 11px; border: 2px solid #e0e0e0; border-radius: 5px; display: flex; align-items: center; justify-content: center; gap: 6px; font-weight: 700; letter-spacing: -.15px; color: #3a3a3a; }
.ga { width: 7px; height: 6px; color: #333; }
.ribbon-main { flex: 1; display: flex; flex-direction: column; }
.rtabs { display: flex; gap: 30px; height: 28px; padding-left: 12px; }
.rtabs span { width: 63px; height: 28px; line-height: 29px; text-align: center; letter-spacing: -.12px; white-space: nowrap; }
.rtabs .on { width: 63px; color: #0e93d8; border-bottom: 4px solid #1295d8; }
.rtabs .w84 { width: 84px; }
.rtabs .w67 { width: 67px; }
.rtabs .w112 { width: 112px; }
.groups { display: flex; height: 72px; }
.group { position: relative; display: flex; flex-direction: column; align-items: center; padding-top: 8px; }
.group + .group::before { content: ""; position: absolute; left: 0; top: 4px; width: 1px; height: 65px; background: #dadada; }
.g1 { width: 268px; padding-right: 1px; } .g2 { width: 323px; } .g3 { width: 115px; } .g4 { width: 118px; }
.g5 { width: 97px; } .g6 { width: 90px; } .g7 { width: 92px; }
.g1 .icons, .g4 .icons, .g5 .icons, .g6 .icons, .g7 .icons { margin-left: -2px; }
.icons { display: flex; gap: 20px; height: 32px; }
.icons svg { width: 32px; height: 32px; }
.gl { display: flex; align-items: center; gap: 5px; margin-top: 15px; line-height: 15px; letter-spacing: -.1px; }
.tight { letter-spacing: -.35px; margin-left: 5px; }
.sel { align-items: center; }
.selbox { width: 48px; height: 47px; background: #0f96d8; display: flex; align-items: center; justify-content: center; }

.notice { position: relative; height: 32px; background: #8ec843; display: flex; align-items: center; justify-content: center; color: #fff; font-weight: 700; letter-spacing: .2px; }
.notice p { margin: -2px 27px 0 0; }
.notice a { text-decoration: underline; text-underline-offset: 2px; }
.nx { position: absolute; right: 16px; top: 10px; width: 10px; height: 10px; }

.canvas { position: relative; flex: 1; background: #fff; overflow: hidden; }
.drawing { position: absolute; left: 0; top: 0; width: 1916px; height: 818px; }
.profile { fill: #f0f9ff; stroke: #72c5ec; stroke-width: 1.9; }
.thin { fill: #b8ddf1; }
.slit { fill: #fff; }

.panel-head { width: 301px; height: 25px; background: #f1f1f1; border: 1px solid #c6c6c6; display: flex; align-items: center; color: #666; }
.panel-head span { margin-left: 10px; letter-spacing: .1px; flex: 1; }
.rew { width: 10px; height: 6px; margin-left: 4px; margin-top: 1px; }
.pm { width: 9px; height: 9px; }
.grip { width: 3px; height: 11px; border-left: 1px solid #777; border-right: 1px solid #999; margin: 0 1px 0 7px; }
.browser { position: absolute; left: 4px; top: 4px; }
.tree { list-style: none; margin: 5px 0 0 -1px; padding: 0; display: flex; flex-direction: column; gap: 4px; color: #333; }
.tree li { display: flex; align-items: center; height: 25px; }
.node { display: flex; align-items: center; height: 25px; background: #f1f1f1; padding-left: 5px; white-space: nowrap; }
.r0 { padding-left: 19px; } .r1 { padding-left: 38px; } .r2 { padding-left: 73px; }
.tw { width: 12px; height: 12px; margin-right: 7px; margin-top: -2px; }
.r1 .tw { margin-left: -1px; }
.tws { width: 10px; height: 14px; margin-left: 1px; margin-right: 7px; margin-top: -1px; }
.eye { width: 16px; height: 12px; margin-top: -1px; }
.node span { padding-top: 1px; }
.root { width: 189px; }
.root b { display: flex; align-items: center; width: 137px; height: 21px; margin-left: 5px; padding-left: 5px; background: #999; color: #fff; }
.cube { width: 17px; height: 17px; margin-right: 15px; margin-top: -1px; }
.radio { width: 14px; height: 14px; margin-left: 6px; }
.gear { width: 16px; height: 16px; margin-top: -2px; } .folder { width: 16px; height: 14px; margin-top: -2px; }
.gear + span, .folder + span { margin-left: 15px; }
.f2 { margin-left: 10px; }
.sk { width: 17px; height: 16px; margin: -1px 14px 0 10px; }
.n83 { width: 83px; } .n108 { width: 108px; } .n118 { width: 118px; } .n123 { width: 123px; }
.n132 { width: 132px; } .n133 { width: 133px; } .n138 { width: 138px; } .n162 { width: 162px; }
.comments { position: absolute; left: 4px; bottom: -3px; height: 24px; width: 301px; border-top: 0; }
.comments span { margin-left: 24px; letter-spacing: -.1px; }

.viewcube { position: absolute; left: 1815px; top: 22px; width: 80px; height: 80px; }
.face { position: absolute; left: 11px; top: 15px; width: 53px; height: 53px; background: #f0f0f0; border: 1px solid #a8a8a8; box-shadow: 0 0 8px rgba(0,0,0,.22); display: flex; align-items: center; justify-content: center; }
.face span { width: 33px; height: 33px; display: flex; align-items: center; justify-content: center; background: #e5e7eb; color: #9b9da3; }
.face em { font: 700 14px/14px "Liberation Sans", sans-serif; transform: scaleX(.8); }
.ax { position: absolute; font-size: 15px; line-height: 14px; transform: scaleX(.75); -webkit-text-stroke: .3px; }
.y { left: 11px; top: 1px; color: #86f586; } .xx { left: 67px; top: 56px; color: #ff8080; } .z { left: 4px; top: 64px; color: #7373f5; }
.dash { left: 65px; top: 63px; width: 3px; height: 2px; background: #ff8080; }

.navbar { position: absolute; left: 816px; bottom: 0; width: 284px; height: 27px; background: #f1f1f1; display: flex; align-items: center; padding-left: 5px; color: #333; }
.navbar > svg { width: 17px; height: 16px; margin-top: 3px; }
.navbar > .na { width: 7px; height: 5px; margin-top: 0; }
.navbar > .a1 { margin-left: 6px; } .navbar > .n2 { margin-left: 8px; } .n3 { margin-left: 9px; } .n4 { margin-left: 9px; }
.n5 { margin-left: 9px; } .navbar > .a5 { margin-left: 6px; } .n6 { margin-left: 16px; } .navbar > .a6 { margin-left: 4px; }
.n7 { margin-left: 11px; } .navbar > .a7 { margin-left: 3px; } .n8 { margin-left: 10px; } .navbar > .a8 { margin-left: 4px; }

.taskbar {
  height: 50px; display: flex; color: #fff; font-family: "Noto Sans", sans-serif;
  background: linear-gradient(90deg, #3a262b 0, #3a262b 60px, #41263b 490px, #2b2d40 540px, #42283a 620px, #4b2836 760px, #46303a 830px, #3e3439 960px, #33252b 1080px, #38292f 1180px, #33313a 1225px, #2c383f 1270px, #2e333b 1340px, #3b2730 1440px, #4a2830 1510px, #482b3a 1600px, #44273a 1660px, #43252c 1760px, #45282d 1920px);
}
.start { width: 60px; display: flex; align-items: center; justify-content: center; }
.start svg { width: 20px; height: 20px; }
.search { width: 430px; height: 50px; background: #333; border: 1px solid #5c5c5c; display: flex; align-items: center; padding-left: 14px; font-size: 18px; letter-spacing: -.14px; color: #dcdcdc; }
.search svg { width: 20px; height: 20px; margin-right: 15px; }
.taskview { width: 63px; display: flex; align-items: center; padding-left: 20px; }
.taskview svg { width: 20px; height: 20px; }
.apps { display: flex; width: 992px; }
.app { position: relative; width: 62px; display: flex; align-items: center; justify-content: center; }
.app svg { width: 30px; height: 30px; }
.run::after { content: ""; position: absolute; left: 6px; right: 5px; bottom: 0; height: 3px; background: #76b9ed; }
.ppt::after { background: linear-gradient(90deg, #76b9ed 40px, #5b87ab 40px); }
.fusion { background: linear-gradient(90deg, #c06d37 56px, #9c5526 56px, #9c5526 57px, #b3602b 57px); border-bottom: 3px solid #ff7800; }
.fusion svg { margin-top: 3px; }
.glyph { font: 700 11px "Noto Sans", sans-serif; fill: #fff; text-anchor: middle; }
.small { font: 700 6px "Noto Sans", sans-serif; fill: #e39a55; text-anchor: middle; }
.tray { display: flex; align-items: center; padding-left: 37px; flex: 1; }
.t1 { width: 16px; height: 9px; } .t2 { width: 20px; height: 14px; margin-left: 12px; margin-top: -1px; }
.t3 { width: 16px; height: 16px; margin-left: 12px; } .t4 { width: 20px; height: 18px; margin-left: 12px; }
.t5 { width: 20px; height: 13px; margin-left: 10px; }
.lang { font-size: 14px; margin-left: 13px; letter-spacing: -.2px; }
.clock { width: 68px; margin-left: 17px; display: flex; flex-direction: column; align-items: center; font-size: 14px; line-height: 23px; margin-top: -1px; }
.notif { position: relative; margin-left: 22px; width: 45px; height: 50px; padding-top: 15px; border-right: 1px solid #8f7d81; }
.notif svg { width: 20px; height: 20px; }
.count { position: absolute; left: 10px; top: 24px; width: 21px; height: 21px; border-radius: 50%; background: #333; border: 1px solid #aaa; font: 700 13px/18px "Noto Sans", sans-serif; text-align: center; }
```
